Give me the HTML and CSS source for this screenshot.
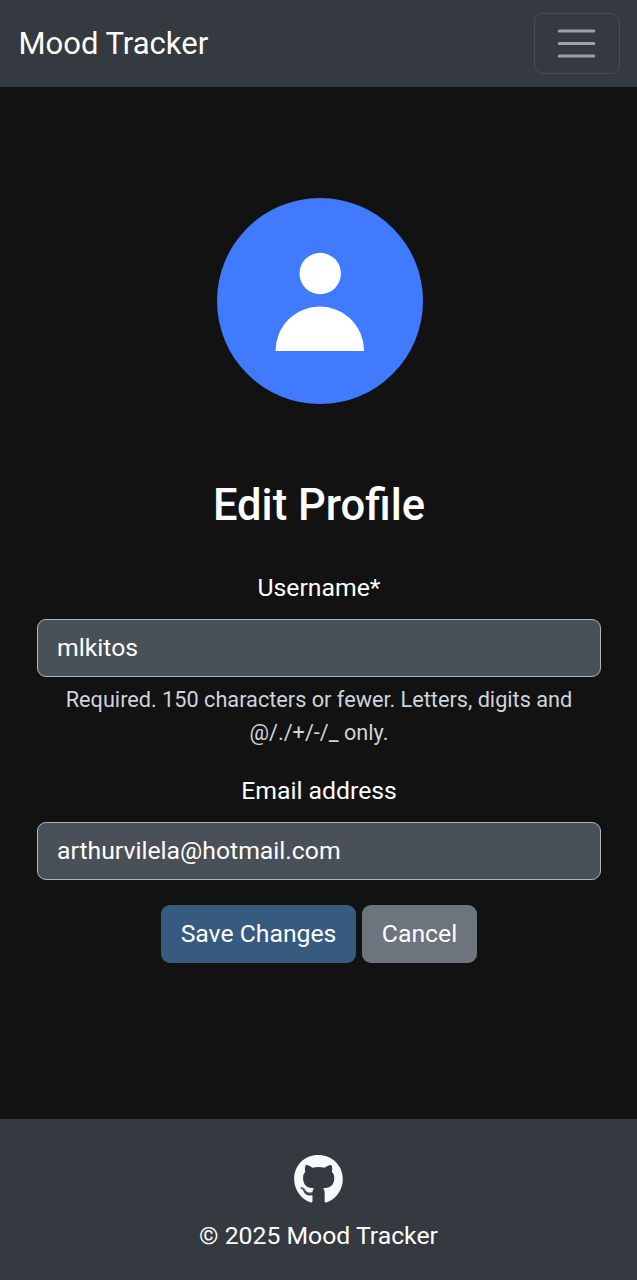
FILE: index.html
```html
<!DOCTYPE html>
<html lang="en">
<head>
<meta charset="utf-8">
<meta name="viewport" content="width=device-width, initial-scale=1">
<title>Mood Tracker</title>
<link rel="stylesheet" href="styles.css">
</head>
<body>
<header class="navbar">
  <a class="brand">Mood Tracker</a>
  <button class="toggler" aria-label="Toggle navigation">
    <svg class="toggler-icon" viewBox="0 0 30 30"><path stroke="currentColor" stroke-linecap="round" stroke-width="2" d="M4 7h22M4 15h22M4 23h22"/></svg>
  </button>
</header>
<main class="profile">
  <svg class="avatar" viewBox="0 0 206 206"><circle cx="103" cy="103" r="103" fill="#407bff"/><circle cx="103.200" cy="75.500" r="20.700" fill="#fff"/><path fill="#fff" d="M58.500 153A44.300 44.500 0 0 1 147.100 153Z"/></svg>
  <h1 class="title">Edit Profile</h1>
  <form class="form">
    <label class="label" for="username">Username*</label>
    <input class="field" id="username" type="text" value="mlkitos">
    <p class="help">Required. 150 characters or fewer. Letters, digits and @/./+/-/_ only.</p>
    <label class="label" for="email">Email address</label>
    <input class="field" id="email" type="text" value="arthurvilela@hotmail.com">
    <div class="actions">
      <button class="btn save" type="button">Save Changes</button>
      <button class="btn cancel" type="button">Cancel</button>
    </div>
  </form>
</main>
<footer class="footer">
  <svg class="github" viewBox="0 8 496 484"><path fill="currentColor" d="M165.900 397.400c0 2-2.300 3.600-5.200 3.600-3.300.3-5.600-1.300-5.600-3.600 0-2 2.300-3.600 5.200-3.600 3-.3 5.600 1.300 5.600 3.600zm-31.100-4.500c-.7 2 1.300 4.300 4.300 4.900 2.600 1 5.600 0 6.200-2s-1.300-4.300-4.300-5.200c-2.600-.7-5.500.3-6.200 2.300zm44.200-1.700c-2.900.7-4.900 2.600-4.600 4.900.3 2 2.900 3.300 5.900 2.600 2.900-.7 4.900-2.600 4.600-4.600-.3-1.900-3-3.200-5.900-2.900zM244.800 8C106.100 8 0 113.300 0 252c0 110.900 69.800 205.800 169.500 239.200 12.800 2.300 17.300-5.600 17.300-12.100 0-6.200-.3-40.400-.3-61.400 0 0-70 15-84.700-29.800 0 0-11.400-29.100-27.800-36.600 0 0-22.900-15.700 1.600-15.400 0 0 24.900 2 38.600 25.800 21.900 38.600 58.600 27.500 72.900 20.900 2.300-16 8.800-27.100 16-33.700-55.900-6.200-112.300-14.300-112.300-110.500 0-27.500 7.600-41.300 23.600-58.900-2.600-6.500-11.100-33.300 2.600-67.900 20.900-6.500 69 27 69 27 20-5.600 41.500-8.500 62.800-8.500s42.800 2.900 62.800 8.500c0 0 48.100-33.600 69-27 13.700 34.700 5.200 61.400 2.600 67.900 16 17.700 25.800 31.500 25.800 58.900 0 96.500-58.900 104.200-114.800 110.500 9.200 7.900 17 22.900 17 46.400 0 33.700-.3 75.400-.3 83.600 0 6.500 4.600 14.400 17.300 12.100C428.200 457.800 496 362.900 496 252 496 113.300 383.500 8 244.800 8zM97.200 352.900c-1.300 1-1 3.300.7 5.200 1.600 1.600 3.900 2.300 5.200 1 1.300-1 1-3.300-.7-5.200-1.600-1.600-3.900-2.300-5.200-1zm-10.800-8.100c-.7 1.300.3 2.900 2.300 3.900 1.600 1 3.600.7 4.300-.7.7-1.300-.3-2.900-2.300-3.900-2-.6-3.600-.3-4.300.7zm32.400 35.600c-1.600 1.300-1 4.300 1.300 6.200 2.300 2.300 5.200 2.600 6.500 1 1.300-1.300.7-4.300-1.300-6.200-2.200-2.300-5.200-2.600-6.500-1zm-11.400-14.700c-1.600 1-1.600 3.600 0 5.900 1.600 2.300 4.300 3.300 5.600 2.300 1.600-1.300 1.600-3.900 0-6.200-1.400-2.300-4-3.300-5.600-2z"/></svg>
  <p class="copyright">© 2025 Mood Tracker</p>
</footer>
</body>
</html>
```
FILE: styles.css
```css
* { box-sizing: border-box; }
body {
  margin: 0;
  min-height: 1280px;
  display: flex;
  flex-direction: column;
  background: #121212;
  color: #fff;
  font: 24.750px/37px Roboto, sans-serif;
}
.navbar {
  height: 87px;
  padding: 0 17px 0 18.500px;
  display: flex;
  align-items: center;
  justify-content: space-between;
  background: #343a40;
}
.brand { font-size: 31px; }
.toggler {
  width: 86px;
  height: 61px;
  padding: 0 2px 0 0;
  display: flex;
  align-items: center;
  justify-content: center;
  background: none;
  border: 1px solid #484e53;
  border-radius: 9px;
  color: #9da1a8;
}
.toggler-icon { width: 47px; height: 47px; }
.profile {
  flex: 1;
  padding: 111px 36px 0 37px;
  text-align: center;
}
.avatar { display: block; width: 206px; height: 206px; margin: 0 auto; position: relative; left: 1px; }
.title { margin: 76px 0 37px; font-size: 43.500px; line-height: 52px; font-weight: 500; }
.label { display: block; margin-bottom: 13px; }
.field {
  display: block;
  width: 100%;
  height: 58px;
  padding: 0 19px 2px;
  background: #495057;
  border: 1px solid #adb5bd;
  border-radius: 9px;
  color: #fff;
  font: inherit;
}
.help { margin: 7px 0 23px; font-size: 21.700px; line-height: 32.500px; color: #ced4da; }
.actions { display: flex; justify-content: center; gap: 6px; margin-top: 25px; }
.btn { height: 58px; padding: 0 0 2px; border: 0; border-radius: 9px; color: #fff; font: inherit; }
.save { width: 195px; background: #375a7f; }
.cancel { width: 115px; background: #6c757d; }
.footer {
  height: 161px;
  padding-top: 36px;
  background: #343a40;
  text-align: center;
}
.github { display: block; width: 49px; height: 47.500px; margin: 0 auto; color: #f8f9fa; }
.copyright { margin: 14.500px 0 0; }
```
